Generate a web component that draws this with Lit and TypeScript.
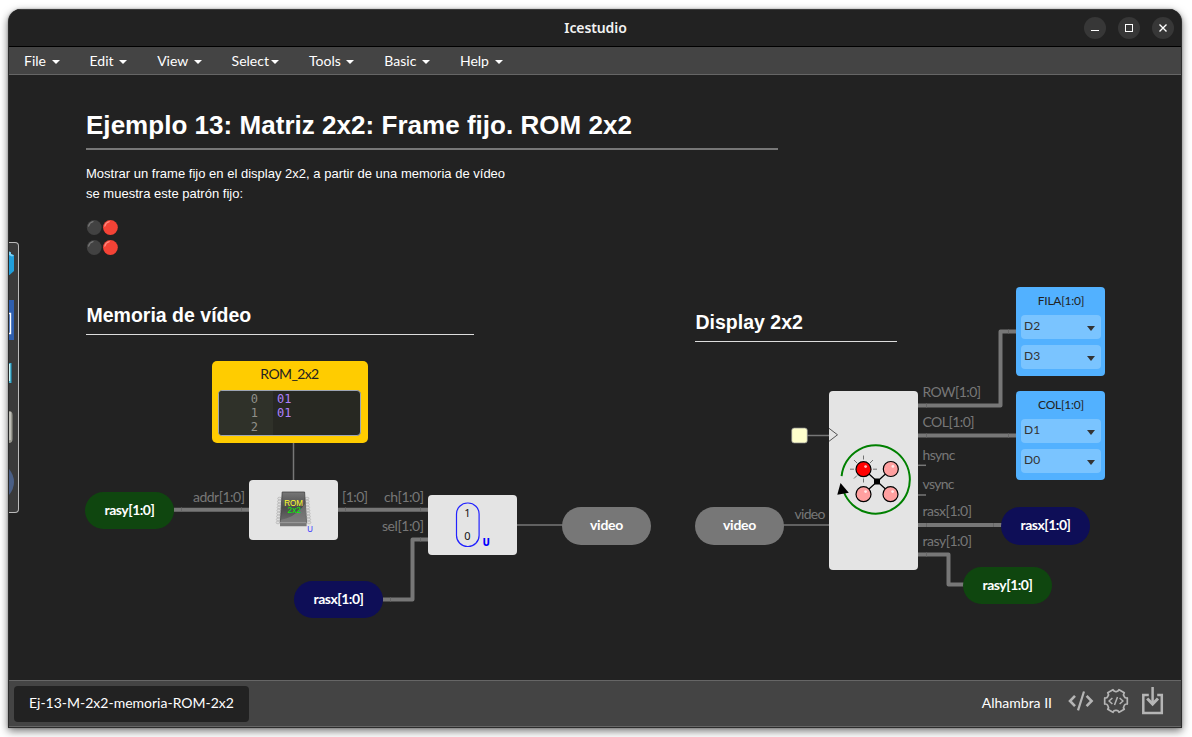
import { LitElement, html, svg, css } from "lit";
import { customElement, property } from "lit/decorators.js";
import { styleMap } from "lit/directives/style-map.js";

// The canvas origin inside the window; node coordinates are in desktop space.
const OX = 9;
const OY = 75;
const place = (x: number, y: number, w: number, h: number) =>
  styleMap({ left: `${x - OX}px`, top: `${y - OY}px`, width: `${w}px`, height: `${h}px` });

// Outline of a six-toothed cog centred on (c, c).
const cog = (c: number, outer: number, inner: number) => {
  const pt = (deg: number, r: number) => {
    const a = (deg * Math.PI) / 180;
    return `${(c + r * Math.cos(a)).toFixed(2)} ${(c + r * Math.sin(a)).toFixed(2)}`;
  };
  let d = "";
  for (let i = 0; i < 6; i++) {
    const t = i * 60;
    d += `${i ? "L" : "M"}${pt(t - 15, outer)}L${pt(t + 15, outer)}Q${pt(t + 17, inner)} ${pt(t + 30, inner)}Q${pt(t + 43, inner)} ${pt(t + 45, outer)}`;
  }
  return d + "Z";
};

@customElement("ice-titlebar")
class IceTitlebar extends LitElement {
  static styles = css`
    :host { display: grid; grid-template-columns: 1fr auto 1fr; align-items: center; background: #222; border-top: 1px solid #3c3c3c; border-bottom: 1px solid #000; box-sizing: border-box; height: 38px; }
    .title { grid-column: 2; font: 600 14px "Noto Sans", sans-serif; color: #f2f2f2; letter-spacing: -0.1px; padding: 0 0 1px 1px; }
    .controls { display: flex; gap: 12px; justify-content: flex-end; padding-right: 7px; }
    .control { width: 22px; height: 22px; border-radius: 50%; background: #373737; display: block; }
  `;
  render() {
    return html`<span class="title">Icestudio</span>
      <div class="controls">
        <svg class="control" viewBox="0 0 22 22"><path d="M7 13.5h8" stroke="#fff" /></svg>
        <svg class="control" viewBox="0 0 22 22"><rect x="7.5" y="7.5" width="7" height="7" fill="none" stroke="#fff" /></svg>
        <svg class="control" viewBox="0 0 22 22"><path d="M7.5 7.5l7 7M14.5 7.5l-7 7" stroke="#fff" stroke-width="1.4" /></svg>
      </div>`;
  }
}

@customElement("ice-menubar")
class IceMenubar extends LitElement {
  static styles = css`
    :host { display: flex; height: 28px; box-sizing: border-box; background: #444; border-bottom: 1px solid #666; }
    .item { padding: 0 15px; font: 14px/28px Lato, sans-serif; color: #fff; white-space: pre; }
    .caret { display: inline-block; margin-left: 2px; vertical-align: middle; border-top: 4px solid #fff; border-left: 4px solid transparent; border-right: 4px solid transparent; }
  `;
  render() {
    return ["File ", "Edit ", "View ", "Select", "Tools ", "Basic ", "Help "].map(
      (t) => html`<span class="item">${t}<span class="caret"></span></span>`
    );
  }
}

@customElement("ice-statusbar")
class IceStatusbar extends LitElement {
  static styles = css`
    :host { display: flex; justify-content: space-between; align-items: flex-start; height: 47px; box-sizing: border-box; background: #444; border-top: 1px solid #666; border-bottom: 1px solid #666; font: 14px Lato, sans-serif; color: #fff; padding: 5px 17px 0 5px; }
    .project { height: 36px; line-height: 34px; padding: 0 15px; background: #222; border-radius: 4px; }
    .tools { display: flex; align-items: flex-start; }
    .board { line-height: 34px; margin-right: 15px; }
    .icon { display: block; }
    .code { margin: 3px 9px 0 0; }
    .gear { margin: 2px 13px 0 0; }
  `;
  render() {
    return html`<div class="project">Ej-13-M-2x2-memoria-ROM-2x2</div>
      <div class="tools">
        <span class="board">Alhambra II</span>
        <svg class="icon code" width="27" height="24" viewBox="0 0 27 24" fill="none" stroke="#b5b5b5" stroke-width="2.6">
          <path d="M8 6.8L3 12l5 5.2M19.6 6.8l5 5.2-5 5.2" /><path d="M17 2.5l-6 18.8" stroke-width="2.2" />
        </svg>
        <svg class="icon gear" width="26" height="26" viewBox="0 0 26 26" fill="none" stroke="#b5b5b5" stroke-width="1.7" stroke-linejoin="round">
          <path d=${cog(13, 11.7, 9.4)} />
          <path d="M9.4 10l-3.4 3 3.4 3M16.6 10l3.4 3-3.4 3M14.5 9l-3 8" stroke-width="1.5" />
        </svg>
        <svg class="icon" width="22" height="29" viewBox="0 0 22 29" fill="none" stroke="#b5b5b5" stroke-width="2.5">
          <path d="M6.8 9H1.3v18h18.5V9h-4.6M10.6 1v17" /><path d="M5.2 12.5l5.4 5.5 5.4-5.5" stroke-width="3" />
        </svg>
      </div>`;
  }
}

@customElement("ice-label")
class IceLabel extends LitElement {
  @property() text = "";
  @property({ reflect: true }) tone = "grey";
  static styles = css`
    :host { display: flex; align-items: center; justify-content: center; box-sizing: border-box; border-radius: 19px; background: #777; color: #fff; font: 700 14px Lato, sans-serif; padding-bottom: 2px; letter-spacing: -0.3px; }
    :host([tone="green"]) { background: #0f460f; letter-spacing: -0.5px; }
    :host([tone="navy"]) { background: #0e0e57; letter-spacing: -0.5px; }
  `;
  render() {
    return html`${this.text}`;
  }
}

@customElement("ice-pins")
class IcePins extends LitElement {
  @property() name = "";
  @property({ type: Array }) pins: string[] = [];
  static styles = css`
    :host { display: flex; flex-direction: column; gap: 6px; box-sizing: border-box; background: #52b1ff; border-radius: 4px; padding: 0 4px 0 5px; font: 12px Lato, sans-serif; color: #222; }
    .name { text-align: center; height: 22px; line-height: 28px; letter-spacing: -0.25px; }
    .pin { display: flex; justify-content: space-between; align-items: center; height: 24px; box-sizing: border-box; padding: 0 6px 3px 3px; border-radius: 4px; background: #7ac4ff; color: #333; }
    .arrow { border-top: 5px solid #333; border-left: 4px solid transparent; border-right: 4px solid transparent; margin-top: 5px; }
  `;
  render() {
    return html`<div class="name">${this.name}</div>
      ${this.pins.map((p) => html`<div class="pin"><span>${p}</span><span class="arrow"></span></div>`)}`;
  }
}

@customElement("ice-memory")
class IceMemory extends LitElement {
  static styles = css`
    :host { display: flex; flex-direction: column; box-sizing: border-box; background: #ffcc00; border-radius: 5px; padding: 0 7px 7px 6px; }
    .name { height: 29px; text-align: center; font: 14px/26px Lato, sans-serif; color: #222; letter-spacing: -0.6px; }
    .editor { flex: 1; display: grid; grid-template-columns: 54px 1fr; border: 1px solid #9da5b4; border-radius: 4px; overflow: hidden; background: #272822; font: 12px/14px "DejaVu Sans Mono", monospace; }
    .gutter { background: #2f3129; color: #8f908a; text-align: right; padding: 1px 15px 0 0; }
    .lines { color: #ae81ff; padding: 1px 0 0 4px; }
  `;
  render() {
    return html`<div class="name">ROM_2x2</div>
      <div class="editor">
        <div class="gutter"><div>0</div><div>1</div><div>2</div></div>
        <div class="lines"><div>01</div><div>01</div></div>
      </div>`;
  }
}

@customElement("ice-dots")
class IceDots extends LitElement {
  static styles = css`
    :host { display: block; }
    .dots { display: block; }
  `;
  render() {
    const dot = (x: number, y: number, on: boolean) => svg`
      <circle cx=${x} cy=${y} r="7.4" fill=${on ? "#f44336" : "#424242"} />
      <path d="M${x - 5.6} ${y - 1.4}q1-3.6 4.4-4.4" fill="none" stroke=${on ? "#ff8a80" : "#757575"} stroke-width="1.3" stroke-linecap="round" />`;
    return html`<svg class="dots" width="34" height="40" viewBox="0 0 34 40">
      ${dot(8.2, 9.5, false)}${dot(24.4, 9.5, true)}${dot(8.2, 29.5, false)}${dot(24.4, 29.5, true)}
    </svg>`;
  }
}

@customElement("ice-canvas")
class IceCanvas extends LitElement {
  static styles = css`
    :host { display: block; position: relative; overflow: hidden; background: #222; font-family: Lato, sans-serif; }
    .wires { position: absolute; left: 0; top: 0; }
    .node { position: absolute; }
    .block { position: absolute; background: #e4e4e4; border-radius: 4px; overflow: hidden; }
    .art { display: block; }
    .note { position: absolute; color: #fff; font-family: "Liberation Sans", Arial, sans-serif; }
    .h1 { margin: 0; font-size: 26px; line-height: 30px; padding-bottom: 8px; border-bottom: 2px solid #777; white-space: nowrap; letter-spacing: 0.03px; }
    .h2 { margin: 0; font-size: 19.5px; line-height: 24px; padding: 0 0 7px 0.5px; border-bottom: 1px solid #ddd; white-space: nowrap; }
    .copy { margin: 14px 0 14px; font-size: 13px; line-height: 20px; white-space: nowrap; letter-spacing: 0.01px; }
    .port { fill: #777; font-size: 14px; }
    .shelf { position: absolute; box-sizing: border-box; background: #3a3a3a; border: 1px solid #bbb; border-left: 0; border-radius: 0 4px 4px 0; }
  `;

  private wires() {
    const thick = [
      "M174 509.7H250", "M337 509.7H429", "M383 599.5H412.5V539.5H429",
      "M917 405.5H1000.5V331.5H1017", "M917 435.5H1017", "M917 525H1002",
      "M917 554.5H948.5V584.5H964",
    ];
    const thin = ["M293.5 442V481", "M516 525H563", "M783 525H830", "M806 435.5H830", "M917 465.3H926", "M917 495H926"];
    const ticks = ["M181.5 507.5v4", "M241.5 507.5v4", "M345.5 507.5v4", "M420.5 507.5v4", "M390.5 597.5v4", "M420.5 537.5v4", "M926.5 403.5v4", "M926.5 433.5v4", "M926.5 523v4", "M993.5 523v4", "M926.5 552.5v4", "M1008.5 329.5v4", "M1008.5 433.5v4"];
    const ports: [number, number, string, string, number][] = [
      [245, 502, "addr[1:0]", "end", 52], [342, 502, "[1:0]", "start", 26], [424, 502, "ch[1:0]", "end", 40],
      [424, 531, "sel[1:0]", "end", 42], [922.5, 397, "ROW[1:0]", "start", 58.5], [922.5, 427, "COL[1:0]", "start", 52],
      [922.5, 460, "hsync", "start", 33], [922.5, 489, "vsync", "start", 32], [922.5, 516, "rasx[1:0]", "start", 49.5],
      [922.5, 546, "rasy[1:0]", "start", 49.5], [825.5, 519, "video", "end", 31],
    ];
    return html`<svg class="wires" width="1172" height="605" viewBox="9 75 1172 605">
      ${thick.map((d) => svg`<path d=${d} fill="none" stroke="#777" stroke-width="4" stroke-linejoin="round" />`)}
      ${thin.map((d) => svg`<path d=${d} fill="none" stroke="#777" stroke-width="1.5" />`)}
      ${ticks.map((d) => svg`<path d=${d} stroke="#666" />`)}
      ${ports.map(([x, y, t, a, w]) => svg`<text class="port" x=${x} y=${y} text-anchor=${a} textLength=${w}>${t}</text>`)}
      <rect x="791.7" y="428" width="15.6" height="15" rx="2.5" fill="#ffffcc" stroke="#888" stroke-width=".7" />
    </svg>`;
  }

  private romArt() {
    const rows = Array.from({ length: 9 }, (_, i) => 18.5 + i * 3);
    return html`<svg class="art" width="90" height="60" viewBox="0 0 90 60">
      <defs>
        <linearGradient id="chip" x1="0" y1="0" x2="0" y2="1"><stop offset="0" stop-color="#777" /><stop offset=".5" stop-color="#4b4b4b" /><stop offset="1" stop-color="#6f6f6f" /></linearGradient>
      </defs>
      ${rows.map((y, i) => svg`<ellipse cx=${30.6 - i * 0.2} cy=${y} rx="1.9" ry="1.3" fill="#ddd" stroke="#aaa" stroke-width=".6" /><ellipse cx=${58 + i * 0.25} cy=${y} rx="1.9" ry="1.3" fill="#ddd" stroke="#aaa" stroke-width=".6" />`)}
      <path d="M33.2 12H55.6l1.9 31H31.3z" fill="url(#chip)" stroke="#444" stroke-width=".8" />
      <path d="M31.6 40q16-3 25-17l1 19H31.5z" fill="#858585" opacity=".6" />
      <path d="M31 42.6h26.6v3.6H31z" fill="#777" /><path d="M31 42.6h26.6" stroke="#aaa" stroke-width=".8" />
      <text x="35.3" y="26" font-size="9" fill="#ffff2a" font-family="Liberation Sans" textLength="18.7" lengthAdjust="spacingAndGlyphs">ROM</text>
      <text x="38.6" y="33" font-size="9" fill="#0f0" font-family="Liberation Sans" textLength="13.2" lengthAdjust="spacingAndGlyphs">2x2</text>
      <text x="58.2" y="52" font-size="9.5" fill="#33f" font-family="Liberation Sans" textLength="5.6" lengthAdjust="spacingAndGlyphs">U</text>
    </svg>`;
  }

  private muxArt() {
    return html`<svg class="art" width="90" height="60" viewBox="0 0 90 60">
      <rect x="28.5" y="8" width="22.6" height="43.5" rx="11" fill="none" stroke="#22f" stroke-width="1.2" />
      <text x="39.4" y="22" text-anchor="middle" font-size="11" fill="#111" font-family="Noto Sans">1</text>
      <text x="39.4" y="45" text-anchor="middle" font-size="11" fill="#111" font-family="Noto Sans">0</text>
      <text x="54.5" y="50.5" font-size="10" font-weight="700" fill="#00f" font-family="DejaVu Sans" textLength="7.5" lengthAdjust="spacingAndGlyphs">U</text>
    </svg>`;
  }

  private displayArt() {
    const led = (x: number, y: number, c: string) => svg`
      <circle cx=${x} cy=${y} r="7.5" fill=${c} stroke="#000" stroke-width="1.2" />
      <circle cx=${x + 2.1} cy=${y - 2.6} r="1.4" fill="#fff" opacity=".75" />`;
    return html`<svg class="art" width="90" height="179" viewBox="829 391 90 179">
      <path d="M829 428.3L837.5 434.8L829 441.3" fill="none" stroke="#555" stroke-width="1" />
      <path d="M841.6 476.2A34.2 34.2 0 1 1 843.8 492" fill="none" stroke="#008000" stroke-width="2" />
      <path d="M840.5 483L848.8 492.8L837.3 494.8z" fill="#000" />
      <path d="M863.5 469L891 494M891 469L863.5 494" stroke="#000" stroke-width="1.2" />
      <rect x="874" y="478.5" width="6" height="6" rx="1" fill="#000" />
      <path d="M863.5 455.5v4M863.5 478.5v4M850 469.2h4M873 469.2h4M854 460l3 3M873 460l-3 3M854 478.5l3-3" stroke="#555" stroke-width=".8" />
      ${led(863.5, 469.2, "#f00")}${led(890.8, 469, "#ffa0a0")}${led(863.5, 494.2, "#ffa0a0")}${led(890.5, 494.2, "#ffa0a0")}
    </svg>`;
  }

  private shelfArt() {
    return html`<svg class="art" width="9" height="269" viewBox="9 243 9 269">
      <path d="M9 251.5l2 1v1.5l3 1V271l-4.5 4H9z" fill="#209fdb" /><path d="M9 251.5l2 1v1.5l3 1.5-2 1L9 255z" fill="#7fd2f5" />
      <rect x="9" y="300" width="5" height="40" fill="#2f5fae" /><path d="M9 313.5h1.5v20H9" fill="#2f5fae" stroke="#fff" stroke-width="1.4" />
      <rect x="9" y="363" width="3" height="20" fill="#45b0cc" /><path d="M9.6 364v17" stroke="#dff" /><path d="M11.5 363v20" stroke="#28708a" />
      <path d="M9 411q3.5 0 3.5 4v24q0 4-3.5 4z" fill="#999990" /><path d="M10 412v28" stroke="#d5d5d0" stroke-width="1.2" />
      <path d="M9 469q5 6 5 13t-5 13z" fill="#4a5f86" />
    </svg>`;
  }

  render() {
    return html`
      <div class="shelf" style=${place(9, 242, 10, 271)}>${this.shelfArt()}</div>
      <div class="note" style=${place(86, 110, 692, 150)}>
        <h1 class="h1">Ejemplo 13: Matriz 2x2: Frame fijo. ROM 2x2</h1>
        <p class="copy">Mostrar un frame fijo en el display 2x2, a partir de una memoria de vídeo<br />se muestra este patrón fijo:</p>
        <ice-dots></ice-dots>
      </div>
      <div class="note" style=${place(86, 303, 388, 32)}><h2 class="h2">Memoria de vídeo</h2></div>
      <div class="note" style=${place(695, 310, 202, 32)}><h2 class="h2">Display 2x2</h2></div>
      ${this.wires()}
      <ice-memory class="node" style=${place(212, 361, 156, 82)}></ice-memory>
      <div class="block" style=${place(249, 480, 89, 59.5)}>${this.romArt()}</div>
      <div class="block" style=${place(428, 495, 89, 59.5)}>${this.muxArt()}</div>
      <div class="block" style=${place(829, 391, 89, 179)}>${this.displayArt()}</div>
      <ice-label class="node" tone="green" text="rasy[1:0]" style=${place(85, 492, 89, 37)}></ice-label>
      <ice-label class="node" tone="navy" text="rasx[1:0]" style=${place(294, 581, 89, 37)}></ice-label>
      <ice-label class="node" text="video" style=${place(562, 507, 89, 37.5)}></ice-label>
      <ice-label class="node" text="video" style=${place(695, 507, 89, 37.5)}></ice-label>
      <ice-label class="node" tone="navy" text="rasx[1:0]" style=${place(1001, 507, 89, 37.5)}></ice-label>
      <ice-label class="node" tone="green" text="rasy[1:0]" style=${place(963, 567, 89, 37)}></ice-label>
      <ice-pins class="node" name="FILA[1:0]" .pins=${["D2", "D3"]} style=${place(1016, 287, 89, 89.4)}></ice-pins>
      <ice-pins class="node" name="COL[1:0]" .pins=${["D1", "D0"]} style=${place(1016, 391, 89, 89.4)}></ice-pins>
    `;
  }
}

@customElement("app-root")
class AppRoot extends LitElement {
  static styles = css`
    :host { display: block; box-sizing: border-box; height: 737px; padding: 9px 10px 9px 8px; background: #fff; overflow: hidden; }
    .window { display: flex; flex-direction: column; box-sizing: border-box; height: 719px; border: 1px solid #2c2c2c; border-top: 0; border-radius: 13px 13px 0 0; overflow: hidden; background: #222; box-shadow: 0 3px 8px rgba(0, 0, 0, 0.55), 0 0 2px rgba(0, 0, 0, 0.3); }
    .canvas { flex: 1; }
  `;
  render() {
    return html`<div class="window">
      <ice-titlebar></ice-titlebar>
      <ice-menubar></ice-menubar>
      <ice-canvas class="canvas"></ice-canvas>
      <ice-statusbar></ice-statusbar>
    </div>`;
  }
}
